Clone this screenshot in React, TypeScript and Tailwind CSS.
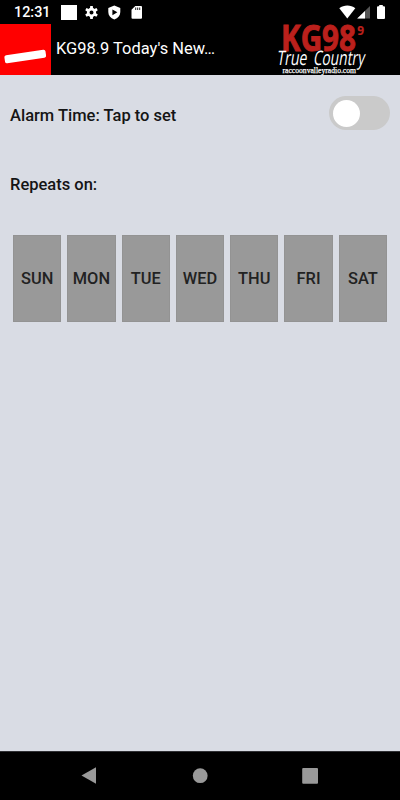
const DAYS = ["SUN", "MON", "TUE", "WED", "THU", "FRI", "SAT"];

function StatusBar() {
  return (
    <div className="flex h-6 items-center bg-black text-white">
      <span className="ml-[14px] w-[47px] pt-px text-[14.4px] font-medium leading-6">12:31</span>
      <svg width="90" height="24" viewBox="0 0 90 24" fill="#fff">
        <rect y="5" width="16" height="15" />
        {/* settings */}
        <g transform="translate(30.5 12.4)">
          <circle r="3.3" fill="none" stroke="#fff" strokeWidth="2.6" />
          {[0, 60, 120, 180, 240, 300].map((a) => (
            <path key={a} d="M-1.6 -3.5L-1.3 -6.5H1.3L1.6 -3.5Z" transform={`rotate(${a})`} />
          ))}
        </g>
        {/* play protect */}
        <path
          fillRule="evenodd"
          d="M53.3 5.5 47.3 8V12C47.3 15.5 49.5 18 53.3 19.4 57.1 18 59.3 15.5 59.3 12V8ZM51.4 9.4 56.4 12.3 51.4 15.2Z"
        />
        {/* sd card */}
        <path d="M74.3 6H80Q81 6 81 7V17.7Q81 18.7 80 18.7H71.5Q70.5 18.7 70.5 17.7V9.8Z" />
        <path d="M74.7 7.5V10M76.7 7.5V10M78.7 7.5V10" stroke="#222" strokeWidth="1" />
      </svg>
      <svg className="ml-auto mr-[12px]" width="50" height="24" viewBox="338 0 50 24">
        <path d="M339.3 8.2C343.8 4.7 350.8 4.7 355.3 8.2L347.3 18.5Z" fill="#fff" />
        <path d="M370 6V18.5H357.2Z" fill="#555" />
        <path d="M365 10.9V18.5H357.2Z" fill="#fff" />
        <path d="M379.2 5H382.8V6.3H384Q385 6.3 385 7.3V18Q385 19 384 19H378Q377 19 377 18V7.3Q377 6.3 378 6.3H379.2Z" fill="#fff" />
      </svg>
    </div>
  );
}

function StationLogo() {
  return (
    <svg className="ml-auto mr-[25px] overflow-visible" width="105" height="51" viewBox="270 24 105 51">
      <g fontFamily="'Open Sans', sans-serif" fontWeight="700" fill="#bb201c" stroke="#bb201c">
        <text x="281" y="51" fontSize="35" textLength="75" lengthAdjust="spacingAndGlyphs" strokeWidth="0.9">
          KG98
        </text>
        <text x="357.3" y="34.5" fontSize="13" textLength="6.8" lengthAdjust="spacingAndGlyphs" strokeWidth="0.2">
          9
        </text>
      </g>
      {/* tagline, leaning a little */}
      <g
        transform="translate(0 64.5) skewX(-9)"
        fontFamily="'Open Sans', sans-serif"
        fontWeight="400"
        fill="#fff"
      >
        <text x="276.5" y="0" fontSize="20" textLength="30" lengthAdjust="spacingAndGlyphs">
          True
        </text>
        <text x="313" y="0" fontSize="20" textLength="51" lengthAdjust="spacingAndGlyphs">
          Country
        </text>
      </g>
      <text
        x="282.5"
        y="72.7"
        fontFamily="'Liberation Serif', serif"
        fontSize="8.5"
        fill="#fff"
        stroke="#fff"
        strokeWidth="0.25"
        textLength="73.5"
        lengthAdjust="spacingAndGlyphs"
      >
        raccoonvalleyradio.com
      </text>
    </svg>
  );
}

function Header() {
  return (
    <header className="flex h-[51px] bg-black text-white">
      <div className="w-[51px] shrink-0 bg-[#ff0000]">
        <svg width="51" height="51" viewBox="0 0 51 51">
          <rect x="4.5" y="28.4" width="41.5" height="8.2" rx="2" fill="#fff" transform="rotate(-8.5 25.2 32.5)" />
        </svg>
      </div>
      <h1 className="ml-[5px] w-[162px] shrink-0 whitespace-nowrap text-[16.45px] leading-[49px]">KG98.9 Today's New…</h1>
      <StationLogo />
    </header>
  );
}

function DayPicker() {
  return (
    <div className="mt-[38px] grid h-[87px] grid-cols-7 gap-[6px] px-[13px]">
      {DAYS.map((day) => (
        <button
          key={day}
          className="flex items-center justify-center border border-[#939393] bg-[#999999] text-[16.4px] font-medium leading-5 text-[#222222]"
        >
          {day}
        </button>
      ))}
    </div>
  );
}

function NavBar() {
  return (
    <nav className="h-[49px] border-t border-[#303034] bg-black">
      <svg width="400" height="48" viewBox="0 752 400 48" fill="#999">
        <path d="M96 767.3V783.8L81.5 775.5Z" />
        <circle cx="200.2" cy="775.7" r="7.4" />
        <rect x="302.2" y="768" width="15.8" height="15.7" rx="1" />
      </svg>
    </nav>
  );
}

export default function App() {
  return (
    <div className="flex h-[800px] w-[400px] flex-col overflow-hidden bg-[#d9dce4] font-['Roboto',sans-serif]">
      <StatusBar />
      <Header />
      <main className="flex-1">
        <div className="flex items-start justify-between px-[10px] pt-[21px]">
          <span className="pt-[8px] text-[16.5px] font-medium leading-6 text-[#151515]">Alarm Time: Tap to set</span>
          <div className="flex h-[34px] w-[61px] items-center rounded-full bg-[#cacaca] pl-[4px]">
            <div className="size-[27px] rounded-full bg-white" />
          </div>
        </div>
        <div className="mt-[43px] pl-[10px] text-[16.5px] font-medium leading-6 text-[#151515]">Repeats on:</div>
        <DayPicker />
      </main>
      <NavBar />
    </div>
  );
}
